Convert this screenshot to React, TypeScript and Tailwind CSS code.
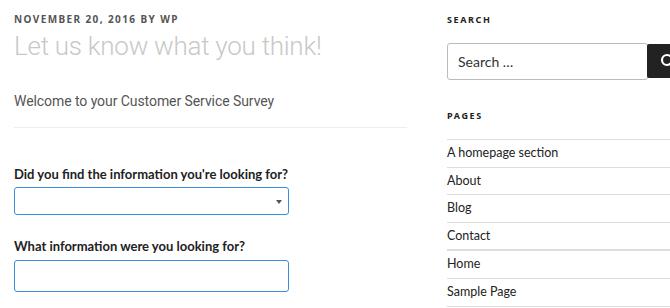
import React from 'react';

const pages = ['A homepage section', 'About', 'Blog', 'Contact', 'Home', 'Sample Page'];

export default function App() {
  return (
    <div className="w-[670px] h-[308px] overflow-hidden bg-white flex" style={{ fontFamily: '"Noto Sans", "Liberation Sans", sans-serif' }}>
      {/* Main column */}
      <div className="w-[393px] ml-[14px] shrink-0">
        <div className="pt-[13px] text-[10px] leading-[12px] font-bold tracking-[0.14em] text-[#555]">
          NOVEMBER 20, 2016 BY WP
        </div>
        <h1 className="mt-[5px] text-[26px] leading-[32px] font-light text-[#c8c8c8] tracking-[-0.01em]" style={{ fontFamily: 'Roboto, "Noto Sans", sans-serif' }}>
          Let us know what you think!
        </h1>
        <p className="mt-[29px] text-[14px] leading-[20px] text-[#555] tracking-[-0.005em]" style={{ fontFamily: 'Roboto, "Noto Sans", sans-serif' }}>
          Welcome to your Customer Service Survey
        </p>
        <div className="mt-[16px] h-px bg-[#eeeeee]" />

        <form className="mt-[37px]" style={{ fontFamily: 'Lato, "Noto Sans", sans-serif' }}>
          <label className="block text-[13px] leading-[18px] font-bold text-[#222]">
            Did you find the information you're looking for?
          </label>
          <div className="mt-[4px] w-[275px] h-[28px] border border-[#3b8fd9] rounded-[3px] relative">
            <span className="absolute right-[6px] top-[12px] w-0 h-0 border-l-[3px] border-r-[3px] border-t-[4px] border-l-transparent border-r-transparent border-t-[#555]" />
          </div>
          <label className="block mt-[22px] text-[13px] leading-[18px] font-bold text-[#222]">
            What information were you looking for?
          </label>
          <div className="mt-[5px] w-[275px] h-[32px] border border-[#3b8fd9] rounded-[3px]" />
        </form>
      </div>

      {/* Sidebar */}
      <div className="ml-[40px] flex-1 min-w-0">
        <div className="pt-[14px] text-[9px] leading-[11px] font-bold tracking-[0.18em] text-[#222]">SEARCH</div>
        <div className="mt-[18px] flex h-[37px] w-[240px]">
          <div className="w-[201px] shrink-0 border border-[#bbbbbb] rounded-[3px] flex items-center pl-[10px] text-[14px] text-[#333]" style={{ fontFamily: 'Lato, "Noto Sans", sans-serif' }}>
            Search …
          </div>
          <div className="ml-[-1px] mt-[1px] h-[34px] w-[50px] shrink-0 bg-[#222222] rounded-[2px] flex items-center pl-[13px]">
            <svg width="16" height="16" viewBox="0 0 16 16" fill="none">
              <circle cx="7" cy="7" r="5" stroke="white" strokeWidth="2.2" />
              <path d="M10.5 10.5 L14.5 14.5" stroke="white" strokeWidth="2.2" strokeLinecap="round" />
            </svg>
          </div>
        </div>
        <div className="mt-[30px] text-[9px] leading-[11px] font-bold tracking-[0.18em] text-[#222]">PAGES</div>
        <ul className="mt-[18px] border-t border-[#dddddd]" style={{ fontFamily: 'Lato, "Noto Sans", sans-serif' }}>
          {pages.map((p, i) => (
            <li
              key={p}
              className={`text-[12.5px] leading-[19.6px] text-[#222] pt-[3px] pb-[4px] ${i === 3 ? 'border-b-2' : 'border-b'} border-[#dddddd]`}
            >
              {p}
            </li>
          ))}
        </ul>
      </div>
    </div>
  );
}
